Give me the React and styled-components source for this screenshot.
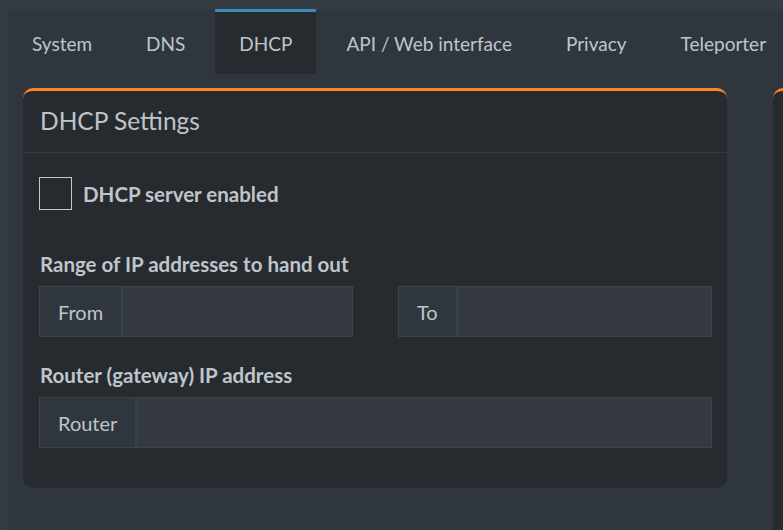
import React from 'react';
import styled, { createGlobalStyle } from 'styled-components';

const GlobalStyle = createGlobalStyle`
    html, body {
        margin: 0;
        padding: 0;
        background: #353c44;
        font-family: Lato, "Open Sans", sans-serif;
        color: #bec5cb;
    }
`

const tabs = ['System', 'DNS', 'DHCP', 'API / Web interface', 'Privacy', 'Teleporter']

class App extends React.Component {
    render() {
        return (
            <Page>
                <GlobalStyle />
                <TabsBox>
                    <TabBar>
                        {tabs.map(t => <Tab key={t} active={t === 'DHCP'}>{t}</Tab>)}
                    </TabBar>
                    <Content>
                        <Card>
                            <CardHeader>
                                <CardTitle>DHCP Settings</CardTitle>
                            </CardHeader>
                            <CardBody>
                                <CheckRow>
                                    <CheckBox type="checkbox" />
                                    <CheckLabel>DHCP server enabled</CheckLabel>
                                </CheckRow>
                                <FieldLabel>Range of IP addresses to hand out</FieldLabel>
                                <TwoCols>
                                    <InputGroup>
                                        <Addon>From</Addon>
                                        <Field />
                                    </InputGroup>
                                    <InputGroup>
                                        <Addon>To</Addon>
                                        <Field />
                                    </InputGroup>
                                </TwoCols>
                                <FieldLabel>Router (gateway) IP address</FieldLabel>
                                <InputGroup>
                                    <Addon>Router</Addon>
                                    <Field />
                                </InputGroup>
                            </CardBody>
                        </Card>
                        <Card tall />
                    </Content>
                </TabsBox>
            </Page>
        )
    }
}

export default App;

const Page = styled.div`
    padding: 9px 0 0 8px;
    height: 530px;
    box-sizing: border-box;
    overflow: hidden;
`

const TabsBox = styled.div`
    background: #30363e;
    height: 100%;
`

const TabBar = styled.div`
    display: flex;
    height: 65px;
`

const Tab = styled.div`
    box-sizing: border-box;
    padding: 0 24px;
    margin-right: 6px;
    display: flex;
    align-items: center;
    font-size: 19px;
    white-space: nowrap;
    color: #bec5cb;
    border-top: 3px solid ${p => p.active ? '#3c8dbc' : 'transparent'};
    background: ${p => p.active ? '#272b30' : 'transparent'};
`

const Content = styled.div`
    display: flex;
    gap: 46px;
    padding: 14px 0 0 15px;
    overflow: hidden;
`

const Card = styled.div`
    flex: 0 0 704px;
    box-sizing: border-box;
    height: ${p => p.tall ? '500px' : '400px'};
    background: #272b30;
    border-top: 3px solid #fd841f;
    border-radius: 10px;
`

const CardHeader = styled.div`
    height: 62px;
    box-sizing: border-box;
    border-bottom: 1px solid #363c43;
    display: flex;
    align-items: center;
    padding: 0 17px 3px;
`

const CardTitle = styled.h3`
    margin: 0;
    font-size: 24.5px;
    font-weight: 400;
    color: #bec5cb;
`

const CardBody = styled.div`
    padding: 24px 15px 0 16px;
`

const CheckRow = styled.label`
    display: flex;
    align-items: center;
    gap: 11px;
    margin-bottom: 42px;
`

const CheckBox = styled.input`
    appearance: none;
    margin: 0;
    width: 33px;
    height: 33px;
    border: 1px solid #c4c8cc;
    background: transparent;
`

const CheckLabel = styled.span`
    font-weight: 700;
    font-size: 20.5px;
`

const FieldLabel = styled.div`
    font-weight: 700;
    font-size: 20.5px;
    line-height: 24px;
    margin: 0 0 10px 1px;
`

const TwoCols = styled.div`
    display: grid;
    grid-template-columns: 314px 314px;
    gap: 45px;
    margin-bottom: 26px;
`

const InputGroup = styled.div`
    display: flex;
    height: 51px;
    box-sizing: border-box;
    border: 1px solid #3d434a;
`

const Addon = styled.div`
    display: flex;
    align-items: center;
    padding: 0 18px;
    font-size: 20px;
    background: #30363d;
    border-right: 2px solid #3b4148;
`

const Field = styled.div`
    flex: 1;
    background: #353a42;
`
